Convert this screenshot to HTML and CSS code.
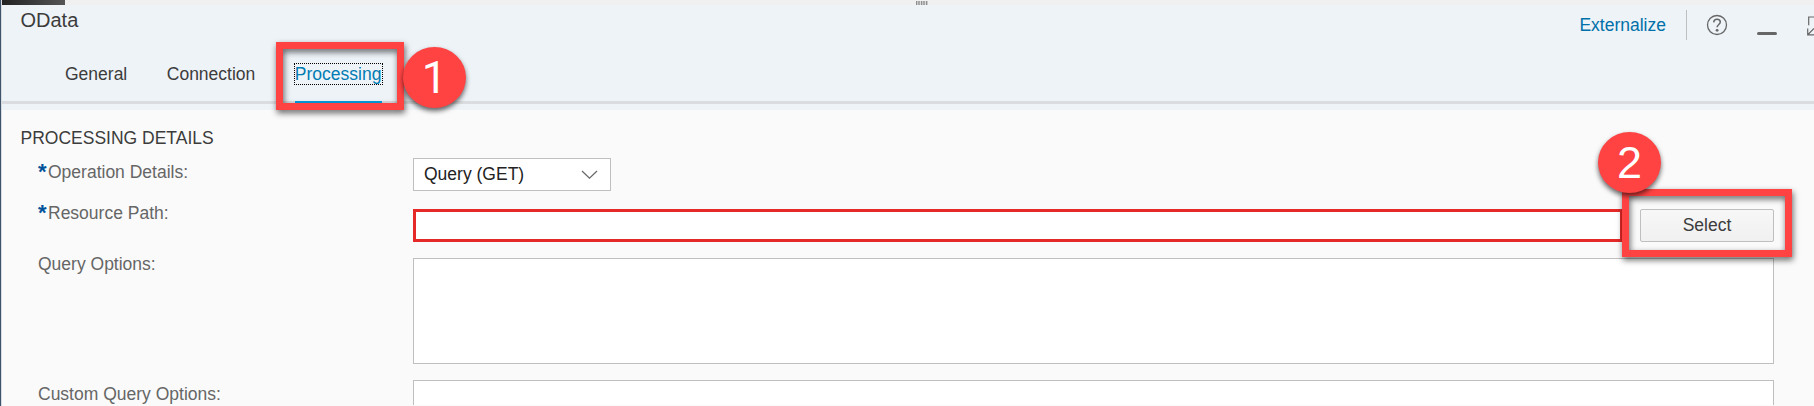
FILE: index.html
```html
<!DOCTYPE html>
<html lang="en">
<head>
<meta charset="utf-8">
<title>OData</title>
<link rel="stylesheet" href="styles.css">
</head>
<body>
<div class="panel">
  <div class="splitter"><span class="splitter-dark"></span><span class="grip"></span></div>
  <header class="header">
    <div class="titlebar">
      <h1 class="title">OData</h1>
      <div class="actions">
        <a class="link">Externalize</a>
        <span class="divider"></span>
        <svg class="icon-help" width="22" height="22" viewBox="0 0 22 22" fill="none" stroke="#666" stroke-width="1.3">
          <circle cx="11" cy="11" r="9.5"/>
          <path d="M7.7 8.4C7.8 6.3 9.1 5.3 11 5.3c2 0 3.3 1.1 3.3 2.8 0 2.4-3.2 2.5-3.2 5.2" stroke-width="1.5"/>
          <circle cx="11.1" cy="16.3" r="1.4" fill="#666" stroke="none"/>
        </svg>
        <span class="minimize"></span>
        <svg class="icon-expand" width="7" height="20" viewBox="0 0 7 20" fill="none" stroke="#666" stroke-width="1.2">
          <path d="M7 1H1.7v8.3M.7 12.5v6.3H7M1 18.5l6-6"/>
        </svg>
      </div>
    </div>
    <nav class="tabs">
      <a class="tab">General</a>
      <a class="tab">Connection</a>
      <a class="tab tab-active"><span class="focus">Processing</span></a>
    </nav>
  </header>
  <main class="content">
    <h2 class="section">PROCESSING DETAILS</h2>
    <div class="row row-operation">
      <label class="label"><b class="req">*</b>Operation Details:</label>
      <div class="select">Query (GET)
        <svg width="17" height="10" viewBox="0 0 17 10" fill="none" stroke="#666" stroke-width="1.2"><path d="M1 1l7.5 7.2L16 1"/></svg>
      </div>
    </div>
    <div class="row row-resource">
      <label class="label"><b class="req">*</b>Resource Path:</label>
      <div class="input-error"></div>
      <button class="button">Select</button>
    </div>
    <div class="row row-query">
      <label class="label">Query Options:</label>
      <div class="textarea"></div>
    </div>
    <div class="row row-custom">
      <label class="label">Custom Query Options:</label>
      <div class="textarea"></div>
    </div>
  </main>
</div>
<div class="callout callout-1"></div>
<div class="badge badge-1">1</div>
<div class="callout callout-2"></div>
<div class="badge badge-2">2</div>
</body>
</html>
```

FILE: styles.css
```css
* { box-sizing: border-box; }
body {
  margin: 0;
  width: 1814px;
  height: 406px;
  overflow: hidden;
  position: relative;
  background: #fafafa;
  font: 17.5px/20px "Liberation Sans", Arial, sans-serif;
  color: #3c3c3c;
}
h1, h2 { margin: 0; font-weight: normal; }
.panel { height: 406px; overflow: hidden; border-left: 1px solid #3f546b; box-shadow: inset 1px 0 #d5dbe1; padding-left: 1px; }
.splitter { height: 5px; background: #f0f0f0; display: flex; }
.splitter-dark { width: 63px; background: linear-gradient(90deg, #222, #555); }
.grip {
  width: 12px; height: 4px; margin: 1px 0 0 851px;
  background: repeating-linear-gradient(90deg, #8f8f8f 0 1px, #c8c8c8 1px 2px, #a8a8a8 2px 4px, #ddd 4px 5px);
}
.header { height: 105px; background: #eef3f8; display: flex; flex-direction: column; }
.titlebar { height: 47px; display: flex; justify-content: space-between; padding-left: 18.5px; }
.title { font-size: 20px; line-height: 24px; padding-top: 3px; }
.actions { display: flex; align-items: flex-start; }
.link { color: #0070a8; margin-top: 10px; }
.divider { width: 1px; height: 30px; background: #bfbfbf; margin: 5px 20px 0 20px; }
.icon-help { margin-top: 9px; margin-left: -1px; }
.minimize { width: 20px; height: 3px; border-radius: 2px; background: #666; margin: 27px 30px 0 29px; }
.icon-expand { margin-top: 11px; }
.tabs { height: 52px; display: flex; padding-left: 63px; gap: 39.5px; border-bottom: 3px solid #dadcdf; padding-top: 12px; }
.tab { height: 37px; }
.tab-active { color: #007cb3; border-bottom: 3px solid #009de0; height: 40px; }
.focus { display: block; width: 89px; height: 22px; margin: -1px -1px 0; border: 1px dotted #000; }
.content { padding: 18px 40px 0 19px; }
.section { font-size: 17.5px; line-height: 20px; height: 30px; margin-left: -0.5px; }
.row { display: flex; align-items: flex-start; padding-left: 17px; }
.row-operation { height: 51px; }
.row-resource { height: 49px; }
.row-query { height: 122px; }
.row-custom { height: 25px; }
.label { width: 375px; color: #666; padding-top: 4px; flex: none; }
.row-resource .label { margin-top: -10px; }
.row-query .label { margin-top: -8px; }
.req { display: inline-block; width: 10px; color: #00539b; font-size: 22px; line-height: 16px; position: relative; top: 1px; }
.select {
  width: 198px; height: 33px; border: 1px solid #bfbfbf; background: #fff; color: #222;
  display: flex; align-items: center; justify-content: space-between; padding: 0 12px 2px 10px;
}
.select svg { margin-top: 2px; }
.input-error { width: 1210px; height: 33px; border: 3px solid #e52929; background: #fff; }
.button {
  width: 134px; height: 33px; margin-left: 17px; padding: 0 0 2px; border: 1px solid #bfbfbf; border-radius: 2px;
  background: linear-gradient(#f7f7f7, #f0f0f0); font: inherit; color: #3c3c3c;
}
.textarea { width: 1361px; height: 106px; border: 1px solid #bfbfbf; background: #fff; }
.row-custom .textarea { height: 25px; border-bottom: 0; }
.callout { position: absolute; border: 7px solid #ff4343; filter: drop-shadow(1px 3px 3px rgba(0,0,0,.6)); }
.callout-1 { left: 276px; top: 42px; width: 128px; height: 68px; }
.callout-2 { left: 1622px; top: 189px; width: 170px; height: 68px; }
.badge {
  position: absolute; width: 63px; height: 61px; border-radius: 50%; background: #ff4343; color: #fff;
  font: 45px/61px "Liberation Sans", Arial, sans-serif; text-align: center; box-shadow: 0 3px 5px rgba(0,0,0,.6);
}
.badge-1 { left: 403px; top: 47px; font-family: Roboto, sans-serif; }
.badge-2 { left: 1598px; top: 132px; }
```
